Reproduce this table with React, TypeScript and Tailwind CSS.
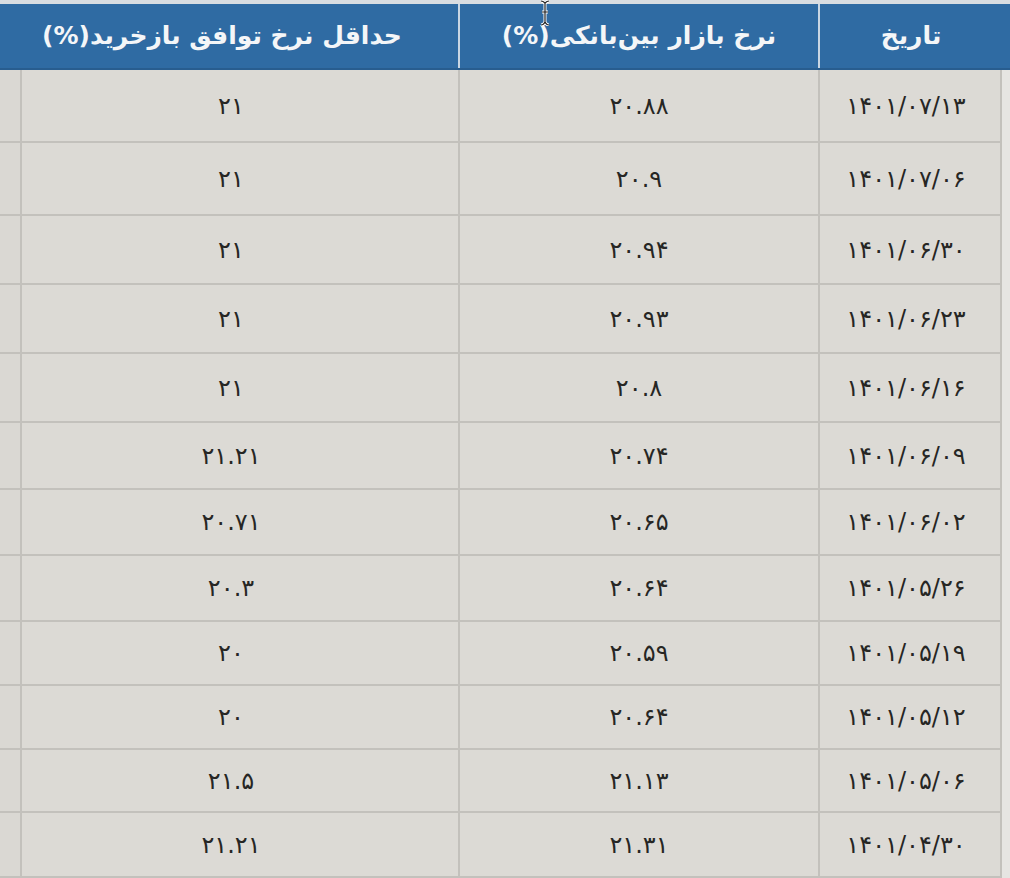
const rows = [
  { date: '۱۴۰۱/۰۷/۱۳', bank: '۲۰.۸۸', repo: '۲۱', h: 'h-[73px]' },
  { date: '۱۴۰۱/۰۷/۰۶', bank: '۲۰.۹', repo: '۲۱', h: 'h-[73px]' },
  { date: '۱۴۰۱/۰۶/۳۰', bank: '۲۰.۹۴', repo: '۲۱', h: 'h-[69px]' },
  { date: '۱۴۰۱/۰۶/۲۳', bank: '۲۰.۹۳', repo: '۲۱', h: 'h-[69px]' },
  { date: '۱۴۰۱/۰۶/۱۶', bank: '۲۰.۸', repo: '۲۱', h: 'h-[69px]' },
  { date: '۱۴۰۱/۰۶/۰۹', bank: '۲۰.۷۴', repo: '۲۱.۲۱', h: 'h-[67px]' },
  { date: '۱۴۰۱/۰۶/۰۲', bank: '۲۰.۶۵', repo: '۲۰.۷۱', h: 'h-[66px]' },
  { date: '۱۴۰۱/۰۵/۲۶', bank: '۲۰.۶۴', repo: '۲۰.۳', h: 'h-[66px]' },
  { date: '۱۴۰۱/۰۵/۱۹', bank: '۲۰.۵۹', repo: '۲۰', h: 'h-[64px]' },
  { date: '۱۴۰۱/۰۵/۱۲', bank: '۲۰.۶۴', repo: '۲۰', h: 'h-[64px]' },
  { date: '۱۴۰۱/۰۵/۰۶', bank: '۲۱.۱۳', repo: '۲۱.۵', h: 'h-[63px]' },
  { date: '۱۴۰۱/۰۴/۳۰', bank: '۲۱.۳۱', repo: '۲۱.۲۱', h: 'h-[65px]' },
];

const cols = 'grid grid-cols-[8px_184px_360px_438px_1fr]';

function Cursor() {
  // text caret sitting over the header
  return (
    <svg className="absolute left-[538px] top-0" width="14" height="26" viewBox="0 0 14 26">
      <path d="M3 1c2 0 3 1 4 2c1-1 2-2 4-2M7 3v19M3 25c2 0 3-1 4-3c1 2 2 3 4 3M4 12h6" fill="none" stroke="#fff" strokeWidth="3" />
      <path d="M3 1c2 0 3 1 4 2c1-1 2-2 4-2M7 3v19M3 25c2 0 3-1 4-3c1 2 2 3 4 3M4 12h6" fill="none" stroke="#222" strokeWidth="1.2" />
    </svg>
  );
}

export default function App() {
  return (
    <div
      dir="rtl"
      className="relative w-[1010px] h-[878px] overflow-hidden bg-[#e3e2de] text-[#262624]"
      style={{ fontFamily: '"DejaVu Sans", "Noto Sans", sans-serif' }}
    >
      <div className="h-[4px] bg-[#d9dde1]" />
      <div className={`${cols} h-[66px] bg-[#2f6ba3] text-[#f4f6f8] text-[25px] font-bold border-b-2 border-[#285d8f]`}>
        <div />
        <div className="flex items-center justify-center border-l-2 border-[#c9d6e3]">تاریخ</div>
        <div className="flex items-center justify-center border-l-2 border-[#c9d6e3]">نرخ بازار بین‌بانکی(%)</div>
        <div className="flex items-center justify-center pr-[34px]">حداقل نرخ توافق بازخرید(%)</div>
        <div />
      </div>
      {rows.map((r, i) => (
        <div key={i} className={`${cols} ${r.h} text-[24px]`}>
          <div className="bg-[#e6e5e2]" />
          <div className="flex items-center justify-center pr-2 bg-[#dcdad5] border-b-2 border-l-2 border-r-2 border-[#c3c1bc]">
            {r.date}
          </div>
          <div className="flex items-center justify-center bg-[#dcdad5] border-b-2 border-l-2 border-[#c3c1bc]">
            {r.bank}
          </div>
          <div className="flex items-center justify-center bg-[#dcdad5] border-b-2 border-l-2 border-[#c3c1bc] pr-[18px]">
            {r.repo}
          </div>
          <div className="bg-[#dad8d3] border-b-2 border-[#c3c1bc]" />
        </div>
      ))}
      <Cursor />
    </div>
  );
}
